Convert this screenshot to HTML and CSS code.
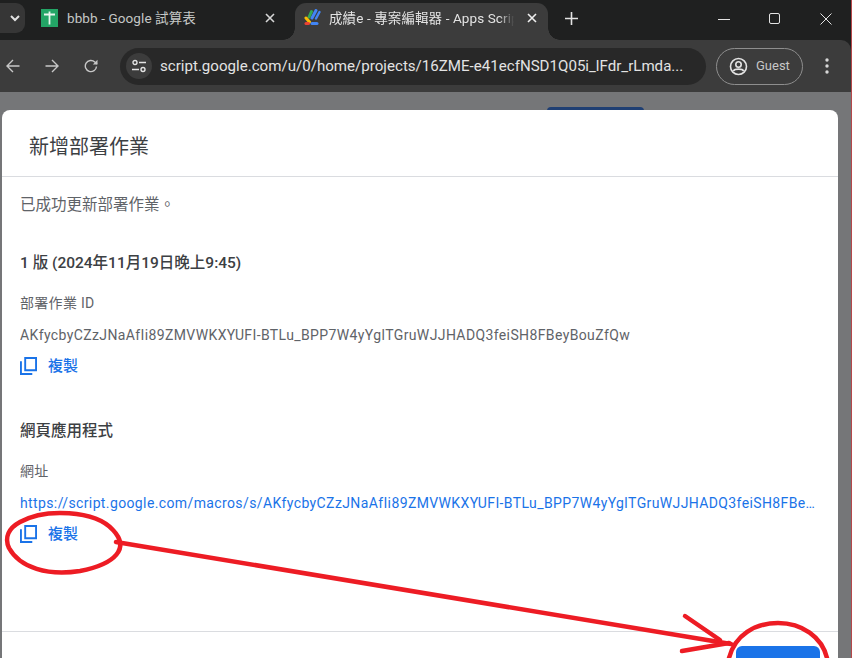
FILE: index.html
```html
<!DOCTYPE html>
<html lang="zh-Hant">
<head>
<meta charset="utf-8">
<title>新增部署作業</title>
<link rel="stylesheet" href="styles.css">
</head>
<body>
<div class="window">
  <header class="tabstrip">
    <button class="tab-menu" aria-label="tabs">
      <svg width="12" height="12" viewBox="0 0 12 12"><path d="M2 4l4 4 4-4" fill="none" stroke="#e3e3e3" stroke-width="2"/></svg>
    </button>
    <div class="tab">
      <svg class="favicon" width="17" height="18" viewBox="0 0 17 18"><rect width="17" height="18" fill="#23a566"/><path d="M3 5.500h11M8.500 2.500v13" stroke="#e8f5ee" stroke-width="1.800" fill="none"/></svg>
      <span class="tab-title">bbbb - Google 試算表</span>
      <svg class="tab-close" width="10" height="10" viewBox="0 0 10 10"><path d="M1 1l8 8M9 1l-8 8" stroke="#d6d6d6" stroke-width="1.600"/></svg>
    </div>
    <div class="tab tab-active">
      <svg class="favicon" width="17" height="17" viewBox="0 0 17 17">
        <path d="M12 1.500L8 9" stroke="#4285f4" stroke-width="3" stroke-linecap="round"/>
        <path d="M15.500 3L12 9.500" stroke="#4285f4" stroke-width="2.400" stroke-linecap="round"/>
        <path d="M7.500 2.500L5 8" stroke="#34a853" stroke-width="3" stroke-linecap="round"/>
        <path d="M2 9l3.500 4" stroke="#fbbc04" stroke-width="3" stroke-linecap="round"/>
        <path d="M2 14.500h2.500" stroke="#ea4335" stroke-width="3" stroke-linecap="round"/>
        <path d="M8 14.500h5" stroke="#4285f4" stroke-width="3" stroke-linecap="round"/>
      </svg>
      <span class="tab-title tab-title-active">成績e - 專案編輯器 - Apps Script</span>
      <svg class="tab-close" width="10" height="10" viewBox="0 0 10 10"><path d="M1 1l8 8M9 1l-8 8" stroke="#f0f0f0" stroke-width="1.600"/></svg>
    </div>
    <svg class="new-tab" width="13" height="13" viewBox="0 0 13 13"><path d="M6.500 0v13M0 6.500h13" stroke="#e3e3e3" stroke-width="1.600"/></svg>
    <div class="win-controls">
      <svg width="12" height="12" viewBox="0 0 12 12"><path d="M0 6.500h12" stroke="#e3e3e3" stroke-width="1"/></svg>
      <svg width="12" height="12" viewBox="0 0 12 12"><rect x=".5" y=".5" width="10" height="10" rx="1.500" fill="none" stroke="#e3e3e3"/></svg>
      <svg width="12" height="12" viewBox="0 0 12 12"><path d="M.5.500l11 11M11.500.500l-11 11" stroke="#e3e3e3"/></svg>
    </div>
  </header>

  <nav class="toolbar">
    <svg class="nav-icon" width="14" height="14" viewBox="0 0 14 14"><path d="M13.500 7H1M7 1L1 7l6 6" fill="none" stroke="#c7c7c7" stroke-width="1.400"/></svg>
    <svg class="nav-icon" width="14" height="14" viewBox="0 0 14 14"><path d="M.5 7H13M7 1l6 6-6 6" fill="none" stroke="#c7c7c7" stroke-width="1.400"/></svg>
    <svg class="nav-icon" width="14" height="14" viewBox="0 0 14 14"><path d="M12.500 7.500A5.600 5.600 0 1 1 10.800 3L13 5" fill="none" stroke="#c7c7c7" stroke-width="1.400"/><path d="M13.500 .8v4.700H8.800z" fill="#c7c7c7"/></svg>
    <div class="omnibox">
      <span class="site-chip">
        <svg width="14" height="14" viewBox="0 0 14 14"><circle cx="3" cy="3.500" r="2" fill="none" stroke="#e3e3e3" stroke-width="1.400"/><path d="M7 3.500h7M0 10.500h7" stroke="#e3e3e3" stroke-width="1.400"/><circle cx="11" cy="10.500" r="2" fill="none" stroke="#e3e3e3" stroke-width="1.400"/></svg>
      </span>
      <span class="url">script.google.com/u/0/home/projects/16ZME-e41ecfNSD1Q05i_lFdr_rLmda...</span>
    </div>
    <div class="profile">
      <svg width="19" height="19" viewBox="0 0 19 19"><circle cx="9.500" cy="9.500" r="8" fill="none" stroke="#e3e3e3" stroke-width="1.600"/><circle cx="9.500" cy="7.500" r="2.700" fill="none" stroke="#e3e3e3" stroke-width="1.600"/><path d="M4.300 14c1.500-2.500 9-2.500 10.400 0" fill="none" stroke="#e3e3e3" stroke-width="1.600"/></svg>
      <span class="profile-name">Guest</span>
    </div>
    <svg class="kebab" width="4" height="16" viewBox="0 0 4 16"><circle cx="2" cy="2" r="1.700" fill="#d8d8d8"/><circle cx="2" cy="8" r="1.700" fill="#d8d8d8"/><circle cx="2" cy="14" r="1.700" fill="#d8d8d8"/></svg>
  </nav>

  <main class="page">
    <div class="behind-button"></div>
    <section class="dialog">
      <h1 class="dialog-title">新增部署作業</h1>
      <div class="dialog-body">
        <p class="message">已成功更新部署作業。</p>
        <h2 class="heading heading-first">1 版 (2024年11月19日晚上9:45)</h2>
        <p class="label">部署作業 ID</p>
        <p class="value">AKfycbyCZzJNaAfIi89ZMVWKXYUFI-BTLu_BPP7W4yYglTGruWJJHADQ3feiSH8FBeyBouZfQw</p>
        <div class="copy">
          <svg width="17" height="18" viewBox="0 0 18 19"><path d="M5.500 1h11.500v13H5.500zM1 4.500V18h12" fill="none" stroke="#1a73e8" stroke-width="2"/></svg>
          <span>複製</span>
        </div>
        <h2 class="heading heading-second">網頁應用程式</h2>
        <p class="label">網址</p>
        <p class="value link">https://script.google.com/macros/s/AKfycbyCZzJNaAfIi89ZMVWKXYUFI-BTLu_BPP7W4yYglTGruWJJHADQ3feiSH8FBeyBouZfQw/exec</p>
        <div class="copy">
          <svg width="17" height="18" viewBox="0 0 18 19"><path d="M5.500 1h11.500v13H5.500zM1 4.500V18h12" fill="none" stroke="#1a73e8" stroke-width="2"/></svg>
          <span>複製</span>
        </div>
      </div>
      <footer class="dialog-footer">
        <button class="done" aria-label="done"></button>
      </footer>
    </section>
  </main>

  <svg class="annotation" width="852" height="658" viewBox="0 0 852 658">
    <g fill="none" stroke="#ed1c24" stroke-width="4.500" stroke-linecap="round">
      <path d="M20 522C45 508 95 510 113 530C130 548 116 564 80 571C48 576 20 568 9 548C4 537 9 528 20 522Z"/>
      <path d="M116 542L731 644"/>
      <path d="M685 616L720 640M682 651L729 643"/>
      <path d="M729 658C735 635 755 623 778 623C802 623 822 637 827 658"/>
    </g>
  </svg>
</div>
</body>
</html>
```
FILE: styles.css
```css
* { box-sizing: border-box; }
html, body { margin: 0; height: 100%; overflow: hidden; }
body { font-family: Roboto, "Noto Sans CJK TC", sans-serif; }
p, h1, h2 { margin: 0; }

.window {
  position: relative;
  width: 852px;
  height: 658px;
  display: flex;
  flex-direction: column;
  overflow: hidden;
  background: #1f2020;
  border-right: 1px solid #b5484a;
}

.tabstrip {
  height: 40px;
  flex: none;
  display: flex;
  align-items: flex-start;
  background: #1f2020;
}
.tab-menu {
  width: 25px;
  height: 30px;
  margin-top: 3px;
  padding: 0 0 0 4px;
  border: 0;
  border-radius: 0 9px 9px 0;
  background: #363636;
  display: flex;
  align-items: center;
  justify-content: center;
}
.tab {
  position: relative;
  width: 270px;
  height: 37px;
  margin-top: 3px;
  padding: 6px 0 0 16px;
  display: flex;
  align-items: flex-start;
  color: #c4c7c5;
}
.tab-active {
  width: 253px;
  padding-left: 9px;
  background: #3c3c3c;
  border-radius: 11px 11px 0 0;
  color: #e3e3e3;
}
.tab-active::before,
.tab-active::after {
  content: "";
  position: absolute;
  bottom: 0;
  width: 12px;
  height: 12px;
}
.tab-active::before {
  left: -12px;
  background: radial-gradient(circle at 0 0, transparent 11.500px, #3c3c3c 12px);
}
.tab-active::after {
  right: -12px;
  background: radial-gradient(circle at 100% 0, transparent 11.500px, #3c3c3c 12px);
}
.favicon { flex: none; }
.tab-title {
  margin-left: 9px;
  width: 193px;
  font-size: 13.500px;
  line-height: 19px;
  letter-spacing: .1px;
  white-space: nowrap;
  overflow: hidden;
}
.tab-title-active {
  margin-left: 8px;
  -webkit-mask-image: linear-gradient(90deg, #000 88%, transparent 96%);
  mask-image: linear-gradient(90deg, #000 88%, transparent 96%);
}
.tab-close { flex: none; margin: 4px 0 0 5px; }
.new-tab { margin: 12px 0 0 17px; }
.win-controls {
  margin: 13px 0 0 auto;
  display: flex;
  gap: 39px;
  padding-right: 19px;
}

.toolbar {
  height: 52px;
  flex: none;
  display: flex;
  align-items: center;
  padding: 0 0 0 6px;
  background: #3c3c3c;
  border-top-right-radius: 10px;
}
.nav-icon { flex: none; margin-right: 25px; }
.omnibox {
  width: 586px;
  height: 37px;
  margin-left: -3px;
  padding: 0 0 0 6px;
  display: flex;
  align-items: center;
  border-radius: 19px;
  background: #282828;
}
.site-chip {
  width: 26px;
  height: 26px;
  flex: none;
  display: flex;
  align-items: center;
  justify-content: center;
  border-radius: 50%;
  background: #3c3c3c;
}
.url {
  margin-left: 8px;
  font-size: 15.100px;
  color: #e3e3e3;
  white-space: nowrap;
}
.profile {
  width: 87px;
  height: 37px;
  margin-left: 10px;
  padding-left: 12px;
  display: flex;
  align-items: center;
  gap: 8px;
  border: 1px solid #8e8e8e;
  border-radius: 19px;
  font-size: 13px;
  color: #c7c7c7;
}
.profile-name { padding-bottom: 2px; }
.kebab { margin-left: 22px; }

.page {
  position: relative;
  flex: 1;
  min-height: 0;
  padding: 18px 0 0 2px;
  background: #757678;
}
.behind-button {
  position: absolute;
  left: 547px;
  top: 15px;
  width: 97px;
  height: 10px;
  border-radius: 4px 4px 0 0;
  background: #1f3f73;
}
.dialog {
  position: relative;
  width: 836px;
  height: 580px;
  display: flex;
  flex-direction: column;
  border-radius: 8px;
  background: #fff;
}
.dialog-title {
  height: 67px;
  flex: none;
  padding: 0 0 0 27px;
  border-bottom: 1px solid #dadce0;
  font-size: 20px;
  font-weight: 400;
  line-height: 75px;
  color: #3c4043;
}
.dialog-body {
  flex: 1;
  min-height: 0;
  padding: 18px 23px 0 18px;
  display: flex;
  flex-direction: column;
  color: #5f6368;
  font-size: 14px;
  line-height: 20px;
}
.message { font-size: 15.500px; }
.heading {
  font-size: 15.500px;
  font-weight: 500;
  color: #3c4043;
}
.heading-first { margin-top: 38px; }
.heading-second { margin-top: 45px; }
.label { margin-top: 20px; letter-spacing: .3px; }
.value {
  margin-top: 12px;
  white-space: nowrap;
  overflow: hidden;
  text-overflow: ellipsis;
  letter-spacing: .38px;
}
.link { color: #1a73e8; }
.copy {
  margin-top: 11px;
  display: flex;
  align-items: center;
  gap: 11px;
  height: 20px;
  font-size: 15px;
  font-weight: 500;
  color: #1a73e8;
}
.dialog-footer {
  height: 59px;
  flex: none;
  padding: 14px 18px 0 0;
  display: flex;
  justify-content: flex-end;
  border-top: 1px solid #dadce0;
}
.done {
  width: 84px;
  height: 36px;
  border: 0;
  border-radius: 6px;
  background: #1a73e8;
}

.annotation {
  position: absolute;
  left: 0;
  top: 0;
  pointer-events: none;
}
```
